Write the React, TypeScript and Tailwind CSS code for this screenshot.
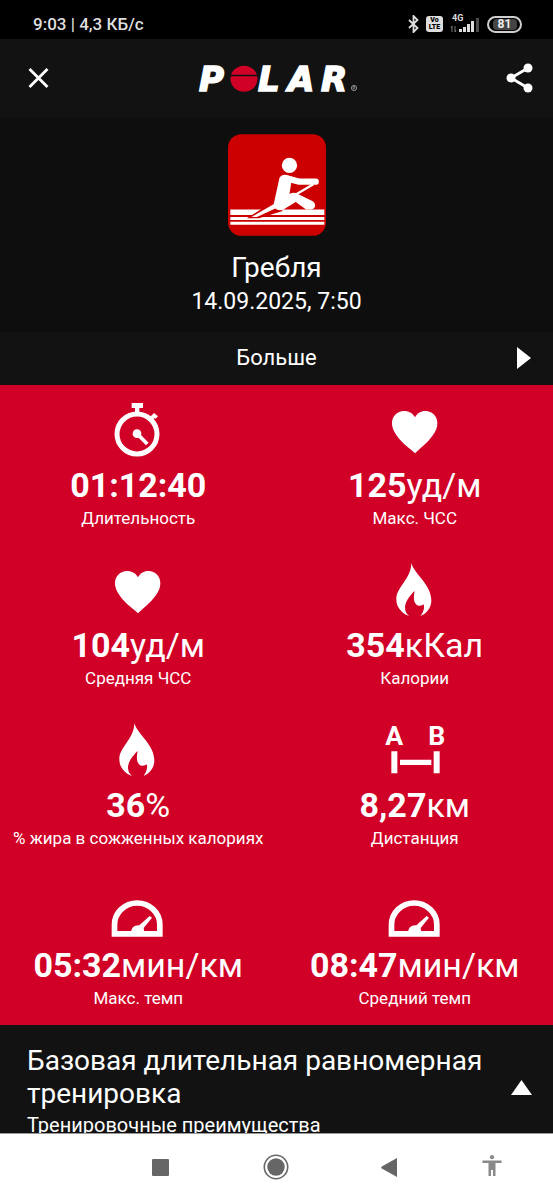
import type { ReactNode } from 'react';

function StatusBar() {
  return (
    <div className="flex h-[39px] shrink-0 items-end justify-between bg-black pr-[31px] pl-[33px] pb-[3px]">
      <span className="text-[17px] leading-6 font-medium text-[#dedede]">9:03 | 4,3 КБ/с</span>
      <div className="flex h-6 items-center gap-[7px]">
        <svg width="11" height="18" viewBox="0 0 11 18" fill="none" stroke="#dedede" strokeWidth="1.8" aria-hidden="true">
          <path d="M1 5l8.5 8-4 4V1l4 4L1 13" />
        </svg>
        <span className="flex h-4 w-[17px] flex-col items-center justify-center rounded-[3px] bg-[#dedede] text-[7px] leading-[7px] font-black text-black">
          <span>Vo</span>
          <span>LTE</span>
        </span>
        <svg className="overflow-visible" width="29" height="18" viewBox="0 0 29 18" fill="#dedede" aria-hidden="true">
          <text x="2" y="6" fontSize="9" fontWeight="700">4G</text>
          <path d="M9 17v-3h3v3zM13 17v-5h3v5zM17 17V9h3v8zM21 17V6h3v11z" />
          <path d="M26 17V3h3v14z" fill="#4b4b4b" />
          <path d="M2 17v-6M2 11l-1 2M5 11v6M5 17l1-2" stroke="#777" fill="none" />
        </svg>
        <span className="ml-px flex h-[17px] w-[35px] items-center justify-center rounded-full border-2 border-[#cfcfcf] text-[12px] leading-3 font-bold text-[#eee]">
          <span className="flex h-[11px] w-6 items-center justify-center rounded-[4px] bg-[#444]">81</span>
        </span>
      </div>
    </div>
  );
}

function PolarLogo() {
  return (
    <svg className="overflow-visible" width="162" height="28" viewBox="0 0 162 28" role="img" aria-label="Polar">
      <g
        fill="#fff"
        stroke="#fff"
        strokeWidth="1.6"
        fontFamily="'DejaVu Sans'"
        fontWeight="700"
        fontStyle="italic"
        fontSize="34"
      >
        <text x="3" y="26">P</text>
        <text x="62" y="26">L</text>
        <text x="92" y="26">A</text>
        <text x="125" y="26">R</text>
      </g>
      <ellipse cx="48" cy="13.700" rx="13.500" ry="13" fill="#d10027" />
      <path d="M34 10.500h28" stroke="#121212" strokeWidth="1.600" />
      <circle cx="158" cy="23" r="2.600" fill="none" stroke="#aaa" strokeWidth="0.800" />
      <path d="M157.200 24.500v-3h1.600v1.500h-1.200l1.400 1.500" fill="none" stroke="#bbb" strokeWidth="0.500" />
    </svg>
  );
}

function RowingIcon() {
  return (
    <svg width="98" height="102" viewBox="35 27 295 306" role="img" aria-label="Гребля">
      <rect x="35" y="27" width="295" height="306" rx="40" fill="#c00" />
      <g fill="#fff">
        <path d="M42 254h283v16H42zM42 276h283v9H42zM42 291h283v9H42z" />
        <path d="M168 232L92 280h36l72-22z" fill="#c00" />
        <path d="M176 236L106 276h16l62-28z" />
        <circle cx="220" cy="121" r="23" />
        <path d="M190 158Q196 148 208 149L228 156L220 207Q233 200 244 206L290 229Q300 237 296 247Q292 254 280 254H270L239 231L202 254Q186 260 176 249Q171 243 173 236Z" />
      </g>
      <path d="M212 160L250 170H299" fill="none" stroke="#fff" strokeWidth="19" strokeLinecap="round" strokeLinejoin="round" />
      <path d="M292 178L180 243" stroke="#fff" strokeWidth="7" />
    </svg>
  );
}

function MetricIcon({ viewBox, children }: { viewBox: string; children: ReactNode }) {
  return (
    <svg className="h-[54px] w-[54px] overflow-visible" viewBox={viewBox} fill="#fff" aria-hidden="true">
      {children}
    </svg>
  );
}

const timer = (
  <MetricIcon viewBox="154 39 162 162">
    <circle cx="232" cy="132" r="60" fill="none" stroke="#fff" strokeWidth="15" />
    <path d="M216 39h34v15h-11v18h-13V54h-10z" />
    <path d="M271 81l12-12 12 10-7 7-3-2-7 7z" />
    <circle cx="232" cy="131" r="13" />
    <path d="M232 131l31 31" stroke="#fff" strokeWidth="11" />
  </MetricIcon>
);

const heart = (
  <MetricIcon viewBox="158 39 162 162">
    <path d="M239 190C225 176 203 163 185 138C174 122 170 112 170 99C170 78 186 63 206 63C221 63 233 70 239 82C245 70 256 63 270 63C291 63 306 79 306 99C306 112 302 123 291 138C274 162 251 177 239 190Z" />
  </MetricIcon>
);

const flame = (
  <MetricIcon viewBox="158 519 162 162">
    <path d="M228 520C238 554 288 584 288 631C288 653 275 670 256 678C263 668 269 655 265 643C262 646 256 648 250 647C238 645 232 630 238 603C225 615 209 635 209 653C209 665 215 672 221 678C197 669 183 651 183 628C183 591 227 568 228 520Z" />
  </MetricIcon>
);

const distance = (
  <MetricIcon viewBox="158 39 162 162">
    <g fontFamily="Roboto" fontWeight="700" fontSize="80" textAnchor="middle">
      <text x="177" y="106">A</text>
      <text x="304" y="106">B</text>
    </g>
    <path d="M168 124h18v66h-18zM295 124h18v66h-18zM194 149h94v16h-94z" />
  </MetricIcon>
);

const gauge = (
  <MetricIcon viewBox="334 9 162 162">
    <path d="M344.500 161.500V134A68 65 0 0 1 480.500 134V161.500Z" fill="none" stroke="#fff" strokeWidth="17" />
    <path d="M394 160C394 144 403 135 419 136L450 108L457 113L432 144Q435 152 431 160Z" />
  </MetricIcon>
);

const metrics = [
  { icon: timer, value: '01:12:40', unit: '', label: 'Длительность' },
  { icon: heart, value: '125', unit: 'уд/м', label: 'Макс. ЧСС' },
  { icon: heart, value: '104', unit: 'уд/м', label: 'Средняя ЧСС' },
  { icon: flame, value: '354', unit: 'кКал', label: 'Калории' },
  { icon: flame, value: '36', unit: '%', label: '% жира в сожженных калориях' },
  { icon: distance, value: '8,27', unit: 'км', label: 'Дистанция' },
  { icon: gauge, value: '05:32', unit: 'мин/км', label: 'Макс. темп' },
  { icon: gauge, value: '08:47', unit: 'мин/км', label: 'Средний темп' },
];

export default function App() {
  return (
    <div className="flex h-screen flex-col bg-[#121212] font-[Roboto,sans-serif] text-white">
      <StatusBar />
      <header className="flex h-[79px] shrink-0 items-center justify-between bg-[#121212] pr-5 pl-7">
        <button type="button" aria-label="Закрыть" className="flex w-5 items-center">
          <svg className="shrink-0" width="21" height="21" viewBox="0 0 21 21" stroke="#fff" strokeWidth="2.800" aria-hidden="true">
            <path d="M1.500 1l18 18M19.500 1l-18 18" />
          </svg>
        </button>
        <PolarLogo />
        <button type="button" aria-label="Поделиться" className="flex w-7 justify-end">
          <svg width="27" height="31" viewBox="0 0 27 31" fill="#fff" aria-hidden="true">
            <path d="M22 5L5 15l17 10" fill="none" stroke="#fff" strokeWidth="2.800" />
            <circle cx="22" cy="5" r="4.500" />
            <circle cx="5" cy="15" r="4.500" />
            <circle cx="22" cy="25" r="4.500" />
          </svg>
        </button>
      </header>

      <main className="min-h-0 flex-1 overflow-y-auto [scrollbar-width:none]">
        <section className="flex flex-col items-center bg-[#0e0e0e] pt-4 pb-3.5">
          <RowingIcon />
          <h1 className="mt-4 text-[28px] leading-8">Гребля</h1>
          <p className="mt-0.5 text-[23px] leading-8">14.09.2025, 7:50</p>
        </section>

        <button type="button" className="grid h-[53px] w-full grid-cols-[1fr_auto_1fr] items-center bg-[#121212] px-[22px] pb-0.5">
          <span className="col-start-2 text-[22px] leading-8">Больше</span>
          <svg className="justify-self-end" width="14" height="22" viewBox="0 0 14 22" fill="#fff" aria-hidden="true">
            <path d="M0 0l14 11L0 22z" />
          </svg>
        </button>

        <section className="grid grid-cols-2 bg-[#d10027]">
          {metrics.map((m) => (
            <div key={m.label} className="flex h-40 flex-col items-center pt-[18px] whitespace-nowrap">
              {m.icon}
              <p className="mt-2 text-[34px] leading-10">
                <span className="font-bold">{m.value}</span>
                {m.unit}
              </p>
              <p className="mt-[3px] text-[17px] leading-5">{m.label}</p>
            </div>
          ))}
        </section>

        <section className="bg-[#121212] pt-[19px] pr-[21px] pl-[27px] pb-6">
          <button type="button" className="flex w-full items-end justify-between text-left">
            <span className="max-w-[470px] text-[28px] leading-[33px]">Базовая длительная равномерная тренировка</span>
            <svg className="mb-[15px] shrink-0" width="21" height="15" viewBox="0 0 21 15" fill="#fff" aria-hidden="true">
              <path d="M0 15L10.500 0L21 15z" />
            </svg>
          </button>
          <p className="mt-[3px] text-[20px] leading-6">Тренировочные преимущества</p>
        </section>
      </main>

      <nav className="grid h-[67px] shrink-0 grid-cols-[103fr_115fr_115fr_111fr_95fr_14fr] items-center border-t border-[#999] bg-white">
        <button type="button" aria-label="Недавние" className="col-start-2 flex justify-center">
          <svg width="17" height="17" viewBox="0 0 17 17" fill="#666" aria-hidden="true">
            <rect width="17" height="17" rx="1" />
          </svg>
        </button>
        <button type="button" aria-label="Домой" className="flex justify-center">
          <svg width="26" height="26" viewBox="0 0 26 26" fill="#666" aria-hidden="true">
            <circle cx="13" cy="13" r="8.700" />
            <circle cx="13" cy="13" r="11.700" fill="none" stroke="#666" strokeWidth="1.600" />
          </svg>
        </button>
        <button type="button" aria-label="Назад" className="flex justify-center">
          <svg width="16" height="19" viewBox="0 0 16 19" fill="#666" aria-hidden="true">
            <path d="M16 0v19L.8 10.500Q-.4 9.500 .8 8.500z" />
          </svg>
        </button>
        <button type="button" aria-label="Специальные возможности" className="flex justify-center pb-1">
          <svg width="20" height="21" viewBox="0 0 20 21" fill="#8a8a8a" aria-hidden="true">
            <circle cx="10" cy="2.200" r="2.100" />
            <path d="M.5 5.500h19v2.500h-6V21h-2.500v-6h-2v6H6.500V8h-6z" />
          </svg>
        </button>
      </nav>
    </div>
  );
}
